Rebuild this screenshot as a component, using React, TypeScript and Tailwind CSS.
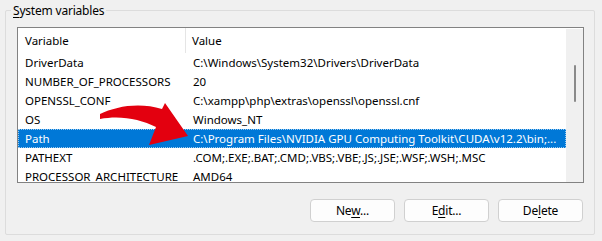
import React from 'react'

interface EnvRow {
  name: string
  value: string
  selected?: boolean
}

const rows: EnvRow[] = [
  { name: 'DriverData', value: 'C:\\Windows\\System32\\Drivers\\DriverData' },
  { name: 'NUMBER_OF_PROCESSORS', value: '20' },
  { name: 'OPENSSL_CONF', value: 'C:\\xampp\\php\\extras\\openssl\\openssl.cnf' },
  { name: 'OS', value: 'Windows_NT' },
  {
    name: 'Path',
    value: 'C:\\Program Files\\NVIDIA GPU Computing Toolkit\\CUDA\\v12.2\\bin;...',
    selected: true,
  },
  { name: 'PATHEXT', value: '.COM;.EXE;.BAT;.CMD;.VBS;.VBE;.JS;.JSE;.WSF;.WSH;.MSC' },
  { name: 'PROCESSOR_ARCHITECTURE', value: 'AMD64' },
]

function WinButton({ label, accessKey }: { label: string; accessKey: number }) {
  return (
    <button className="w-[85px] h-[23px] rounded-[4px] border border-[#d0d0d0] bg-[#fdfdfd] text-[12px] tracking-[-0.2px] text-black leading-none">
      {label.slice(0, accessKey)}
      <span className="underline underline-offset-2">{label[accessKey]}</span>
      {label.slice(accessKey + 1)}
    </button>
  )
}

export default function App() {
  return (
    <div
      className="relative w-[602px] h-[241px] bg-[#f0f0f0] pl-[5px] pt-[10px] overflow-hidden"
      style={{ fontFamily: '"Noto Sans", "Segoe UI", sans-serif' }}
    >
      {/* System variables group */}
      <div className="relative w-[590px] h-[225px] border border-[#dcdcdc] rounded-[2px] pl-[11px] pt-[16px]">
        <span className="absolute -top-[8px] left-[5px] px-[2px] bg-[#f0f0f0] text-[12px] tracking-[-0.2px] leading-[15px] text-black">
          <span className="underline underline-offset-2">S</span>ystem variables
        </span>

        {/* List view */}
        <div className="w-[567px] h-[156px] border border-[#828282] bg-white flex overflow-hidden">
          <div className="flex-1 flex flex-col">
            <div className="h-[25px] flex shrink-0 text-[11.5px] text-black">
              <div className="w-[168px] pl-[7px] flex items-center border-r border-[#e5e5e5]">Variable</div>
              <div className="flex-1 pl-[6px] flex items-center">Value</div>
            </div>
            {rows.map((row) => (
              <div
                key={row.name}
                className={`h-[19px] shrink-0 flex text-[11.5px] whitespace-nowrap ${
                  row.selected
                    ? 'bg-[#0078d7] text-white outline outline-1 outline-dotted outline-[#99c9ef] -outline-offset-1'
                    : 'text-black'
                }`}
              >
                <div className="w-[168px] pl-[7px] flex items-center">{row.name}</div>
                <div className="flex-1 pl-[7px] flex items-center">{row.value}</div>
              </div>
            ))}
          </div>

          {/* Scrollbar */}
          <div className="w-[17px] shrink-0 bg-[#f0f0f0] flex justify-center pt-[36px] mt-[1px]">
            <div className="w-[2px] h-[37px] bg-[#8a8a8a] rounded-full" />
          </div>
        </div>

        {/* Buttons */}
        <div className="flex justify-end gap-[9px] mt-[16px] pr-[11px]">
          <WinButton label="New..." accessKey={2} />
          <WinButton label="Edit..." accessKey={1} />
          <WinButton label="Delete" accessKey={2} />
        </div>
      </div>

      {/* Red annotation arrow */}
      <svg className="absolute left-[96px] top-[100px]" width="96" height="50" viewBox="0 0 96 50">
        <path
          d="M4 14 C 20 6, 44 2, 66 9 L 69 3 L 92 36 L 53 45 L 60 27 C 44 19, 24 15, 4 19 Z"
          fill="#e3000f"
        />
      </svg>
    </div>
  )
}
